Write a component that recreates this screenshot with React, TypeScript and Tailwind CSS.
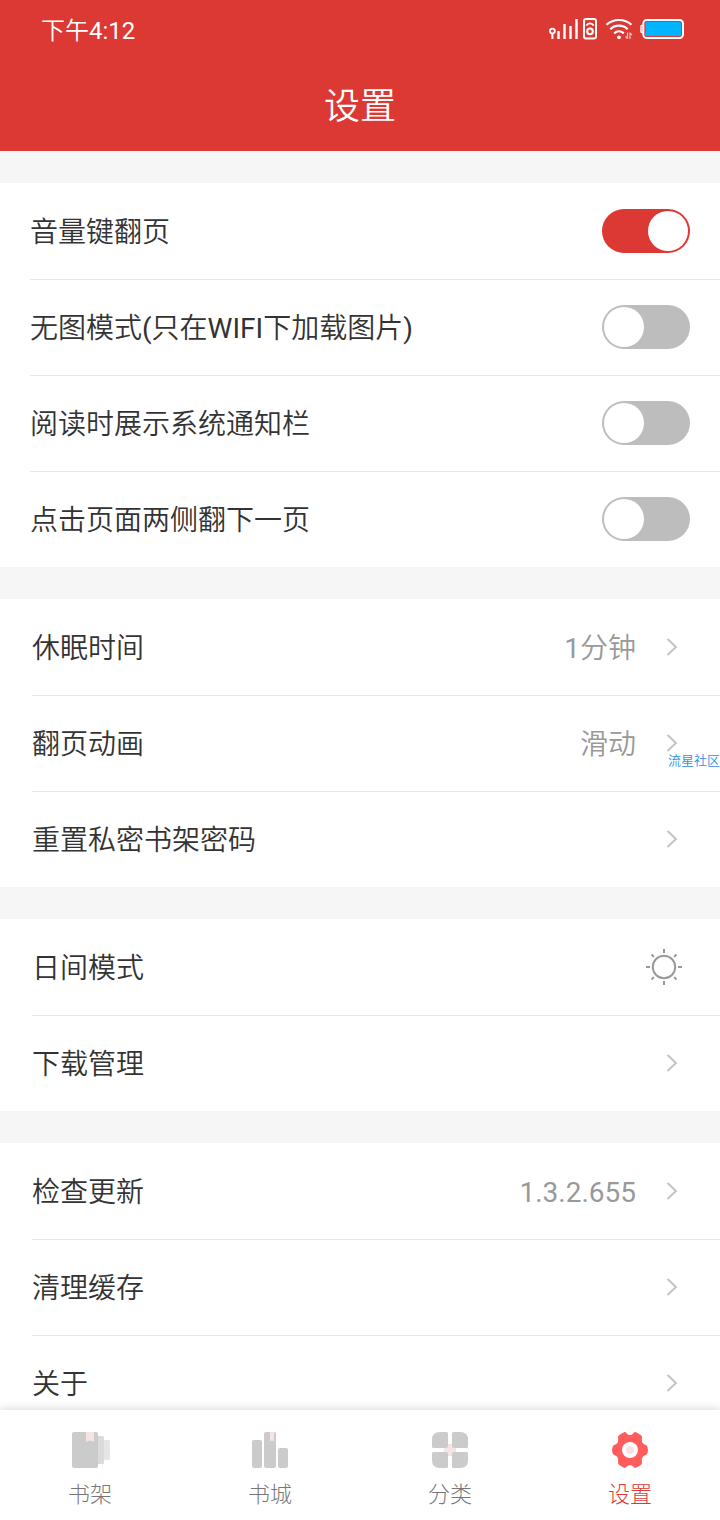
import React, { useState } from 'react';

interface ToggleItem {
  id: string;
  label: string;
  on: boolean;
}

interface LinkItem {
  label: string;
  value?: string;
  icon?: 'sun';
}

const toggleItems: ToggleItem[] = [
  { id: 'volume-key', label: '音量键翻页', on: true },
  { id: 'no-image', label: '无图模式(只在WIFI下加载图片)', on: false },
  { id: 'notification', label: '阅读时展示系统通知栏', on: false },
  { id: 'tap-sides', label: '点击页面两侧翻下一页', on: false },
];

const groups: LinkItem[][] = [
  [
    { label: '休眠时间', value: '1分钟' },
    { label: '翻页动画', value: '滑动' },
    { label: '重置私密书架密码' },
  ],
  [{ label: '日间模式', icon: 'sun' }, { label: '下载管理' }],
  [{ label: '检查更新', value: '1.3.2.655' }, { label: '清理缓存' }, { label: '关于' }],
];

const SignalIcon = () => (
  <svg className="w-[30px] h-[22px]" viewBox="0 0 30 22" fill="none" stroke="#fff" aria-hidden="true">
    <circle cx="4.4" cy="13" r="2.4" strokeWidth="1.8" />
    <path d="M4.4 15.5V21" strokeWidth="2" />
    <path d="M10.5 13v8M16.5 6v15M22.5 8v13M28.5 1v20" strokeWidth="2.4" />
  </svg>
);

const CardIcon = () => (
  <svg className="w-[14px] h-[22px]" viewBox="0 0 14 22" fill="none" stroke="#fff" aria-hidden="true">
    <rect x="1" y="1" width="12" height="19.5" rx="2" strokeWidth="2" />
    <path d="M3.3 7.6C5 4.6 9 4.6 10.7 7.6" strokeWidth="1.8" />
    <circle cx="7" cy="13.4" r="2.8" strokeWidth="2" />
  </svg>
);

const WifiIcon = () => (
  <svg className="w-[28px] h-[22px]" viewBox="0 0 28 22" fill="none" stroke="#fff" aria-hidden="true">
    <path d="M1.5 6.8C8.5 .4 19.5 .4 26.5 6.8" strokeWidth="2.2" />
    <path d="M5.3 11.2C10 6.4 18 6.4 22.7 11.2" strokeWidth="2.2" />
    <path d="M9.2 15.4C12 12.8 16 12.8 18.8 15.4" strokeWidth="2.2" />
    <circle cx="14" cy="19.3" r="1.9" fill="#fff" stroke="none" />
    <path d="M22.5 14.5v6.5M20.5 18.5l2 2M25 21v-6.5M27 17l-2-2" strokeWidth="1.2" opacity="0.7" />
  </svg>
);

const BatteryIcon = () => (
  <svg className="w-[44px] h-[22px]" viewBox="0 0 44 22" fill="none" aria-hidden="true">
    <path d="M3 7.5H1.8Q1 7.5 1 8.5v5Q1 14.5 1.8 14.5H3" stroke="#fff" strokeWidth="1.5" />
    <rect x="3.3" y="2" width="39.7" height="18" rx="3.5" stroke="#fff" strokeWidth="2" />
    <rect x="5.5" y="4" width="35.5" height="14" rx="1.5" fill="#00b4ff" />
  </svg>
);

const ChevronIcon = () => (
  <svg className="w-3 h-[18px] mx-2.5" viewBox="0 0 12 18" fill="none" stroke="#c4c4c4" strokeWidth="2" aria-hidden="true">
    <path d="M1.5 1l8.5 8-8.5 8" />
  </svg>
);

const SunIcon = () => (
  <svg className="size-9 mr-1.5" viewBox="0 0 36 36" fill="none" stroke="#999" strokeWidth="2" aria-hidden="true">
    <circle cx="18" cy="18" r="11.2" />
    <path d="M18 0v4M18 32v4M0 18h4M32 18h4M5.5 5.5l2.4 2.4M28.1 28.1l2.4 2.4M5.5 30.5l2.4-2.4M28.1 7.9l2.4-2.4" />
  </svg>
);

const ShelfIcon = () => (
  <svg className="size-9 overflow-visible" viewBox="0 0 36 36" aria-hidden="true">
    <rect x="24" y="8" width="14" height="20" rx="1.5" fill="#e6e6e6" />
    <rect x="20" y="4" width="12" height="28" rx="1.5" fill="#dbdbdb" />
    <rect width="26" height="36" rx="2" fill="#cbcbcb" />
    <path d="M14 0h8v10q-4-3-8 0z" fill="#f6e4e4" />
  </svg>
);

const StoreIcon = () => (
  <svg className="size-9" viewBox="0 0 36 36" aria-hidden="true">
    <rect y="8" width="10" height="28" rx="2" fill="#cbcbcb" />
    <rect x="12" width="12" height="36" rx="2" fill="#cbcbcb" />
    <rect x="26" y="16" width="10" height="20" rx="2" fill="#cbcbcb" />
    <path d="M18 0h4v10q-2-3-4 0z" fill="#f6e4e4" />
  </svg>
);

const CategoryIcon = () => (
  <svg className="size-9" viewBox="0 0 36 36" aria-hidden="true">
    <g fill="#cbcbcb">
      <path d="M8 0h6.5Q16 0 16 1.5V16H1.5Q0 16 0 14.5V8Q0 0 8 0z" />
      <path d="M28 0h-6.5Q20 0 20 1.5V16h14.5q1.5 0 1.5-1.5V8Q36 0 28 0z" />
      <path d="M8 36h6.5q1.5 0 1.5-1.5V20H1.5Q0 20 0 21.5V28Q0 36 8 36z" />
      <path d="M28 36h-6.5Q20 36 20 34.5V20h14.5q1.5 0 1.5 1.5V28Q36 36 28 36z" />
    </g>
    <path d="M16 12h4v2q0 2 2 2h2v4h-2q-2 0-2 2v2h-4v-2q0-2-2-2h-2v-4h2q2 0 2-2z" fill="#f6e4e4" />
  </svg>
);

const GearIcon = () => (
  <svg className="size-9" viewBox="0 0 36 36" aria-hidden="true">
    <path
      d="M12.5 0Q14 0 14.8 1.4Q16 3 18 3T21.2 1.4Q22 0 23.5 0L28.5 2.8Q30.5 4 30 6Q29 11 32.5 12.5L34.5 13.2Q36 15 36 18T34.5 22.8L32.5 23.5Q29 25 30 30Q30.5 32 28.5 33.2L23.5 36Q22 36 21.2 34.6Q20 33 18 33T14.8 34.6Q14 36 12.5 36L7.5 33.2Q5.5 32 6 30Q7 25 3.5 23.5L1.5 22.8Q0 21 0 18T1.5 13.2L3.5 12.5Q7 11 6 6Q5.5 4 7.5 2.8Z"
      fill="#ff5c5c"
    />
    <circle cx="18" cy="18" r="8" fill="#fff" />
    <circle cx="18" cy="18" r="4" fill="#f6e4e4" />
  </svg>
);

const tabs = [
  { label: '书架', icon: <ShelfIcon /> },
  { label: '书城', icon: <StoreIcon /> },
  { label: '分类', icon: <CategoryIcon /> },
  { label: '设置', icon: <GearIcon />, active: true },
];

const divider = 'shadow-[inset_0_1px_#e8e8e8]';

const ToggleRow: React.FC<{ item: ToggleItem; first: boolean }> = ({ item, first }) => {
  const [on, setOn] = useState(item.on);

  return (
    <li className={`ml-[30px] h-24 pr-[30px] flex items-center justify-between ${first ? '' : divider}`}>
      <label htmlFor={item.id} className="pt-1">{item.label}</label>
      <input
        id={item.id}
        type="checkbox"
        role="switch"
        checked={on}
        onChange={e => setOn(e.target.checked)}
        className="appearance-none flex w-22 h-11 p-0.5 rounded-full bg-[#bdbdbd] checked:bg-[#dc3934] checked:justify-end before:size-10 before:rounded-full before:bg-white"
      />
    </li>
  );
};

const LinkRow: React.FC<{ item: LinkItem; first: boolean }> = ({ item, first }) => (
  <li className={`ml-8 ${first ? '' : divider}`}>
    <button type="button" className="w-full h-24 pr-8 flex items-center text-left">
      <span className="flex-1 pt-1">{item.label}</span>
      {item.value && <span className="pt-1 mr-5 text-[#999]">{item.value}</span>}
      {item.icon === 'sun' ? <SunIcon /> : <ChevronIcon />}
    </button>
  </li>
);

export default function App() {
  return (
    <div className="relative h-screen flex flex-col overflow-hidden bg-[#f6f6f6] text-[#333] text-[28px] leading-10 font-[Roboto,'Noto_Sans_CJK_SC_DemiLight','Noto_Sans_CJK_SC',sans-serif]">
      <header className="bg-[#dc3934] text-white">
        <div className="h-[58px] pl-[41px] pr-9 flex items-center justify-between">
          <span className="pt-1 text-2xl">下午4:12</span>
          <div className="flex items-center">
            <SignalIcon />
            <span className="ml-[5px]"><CardIcon /></span>
            <span className="ml-2"><WifiIcon /></span>
            <span className="ml-[7px]"><BatteryIcon /></span>
          </div>
        </div>
        <h1 className="h-[93px] pt-1 flex items-center justify-center text-4xl">设置</h1>
      </header>

      <main className="flex-1 min-h-0 overflow-y-auto [scrollbar-width:none] pt-8 flex flex-col gap-8">
        <ul className="bg-white">
          {toggleItems.map((item, i) => (
            <ToggleRow key={item.id} item={item} first={i === 0} />
          ))}
        </ul>
        {groups.map((group, g) => (
          <ul key={g} className="bg-white">
            {group.map((item, i) => (
              <LinkRow key={item.label} item={item} first={i === 0} />
            ))}
          </ul>
        ))}
      </main>

      {/* Bottom tab bar */}
      <nav className="relative h-[110px] bg-white grid grid-cols-4 font-light font-[Roboto,'Noto_Sans_CJK_SC',sans-serif] shadow-[0_-1px_8px_rgba(0,0,0,0.16)]">
        {tabs.map(tab => (
          <a
            key={tab.label}
            href="#"
            className={`pt-[22px] flex flex-col items-center gap-[11px] text-[22px] leading-8 ${tab.active ? 'text-[#dc3934]' : 'text-[#777]'}`}
          >
            {tab.icon}
            <span>{tab.label}</span>
          </a>
        ))}
      </nav>

      {/* Floating community tag */}
      <span className="absolute right-0 top-[751px] text-[13px] leading-5 text-[#2f8fee]">流星社区</span>
    </div>
  );
}
